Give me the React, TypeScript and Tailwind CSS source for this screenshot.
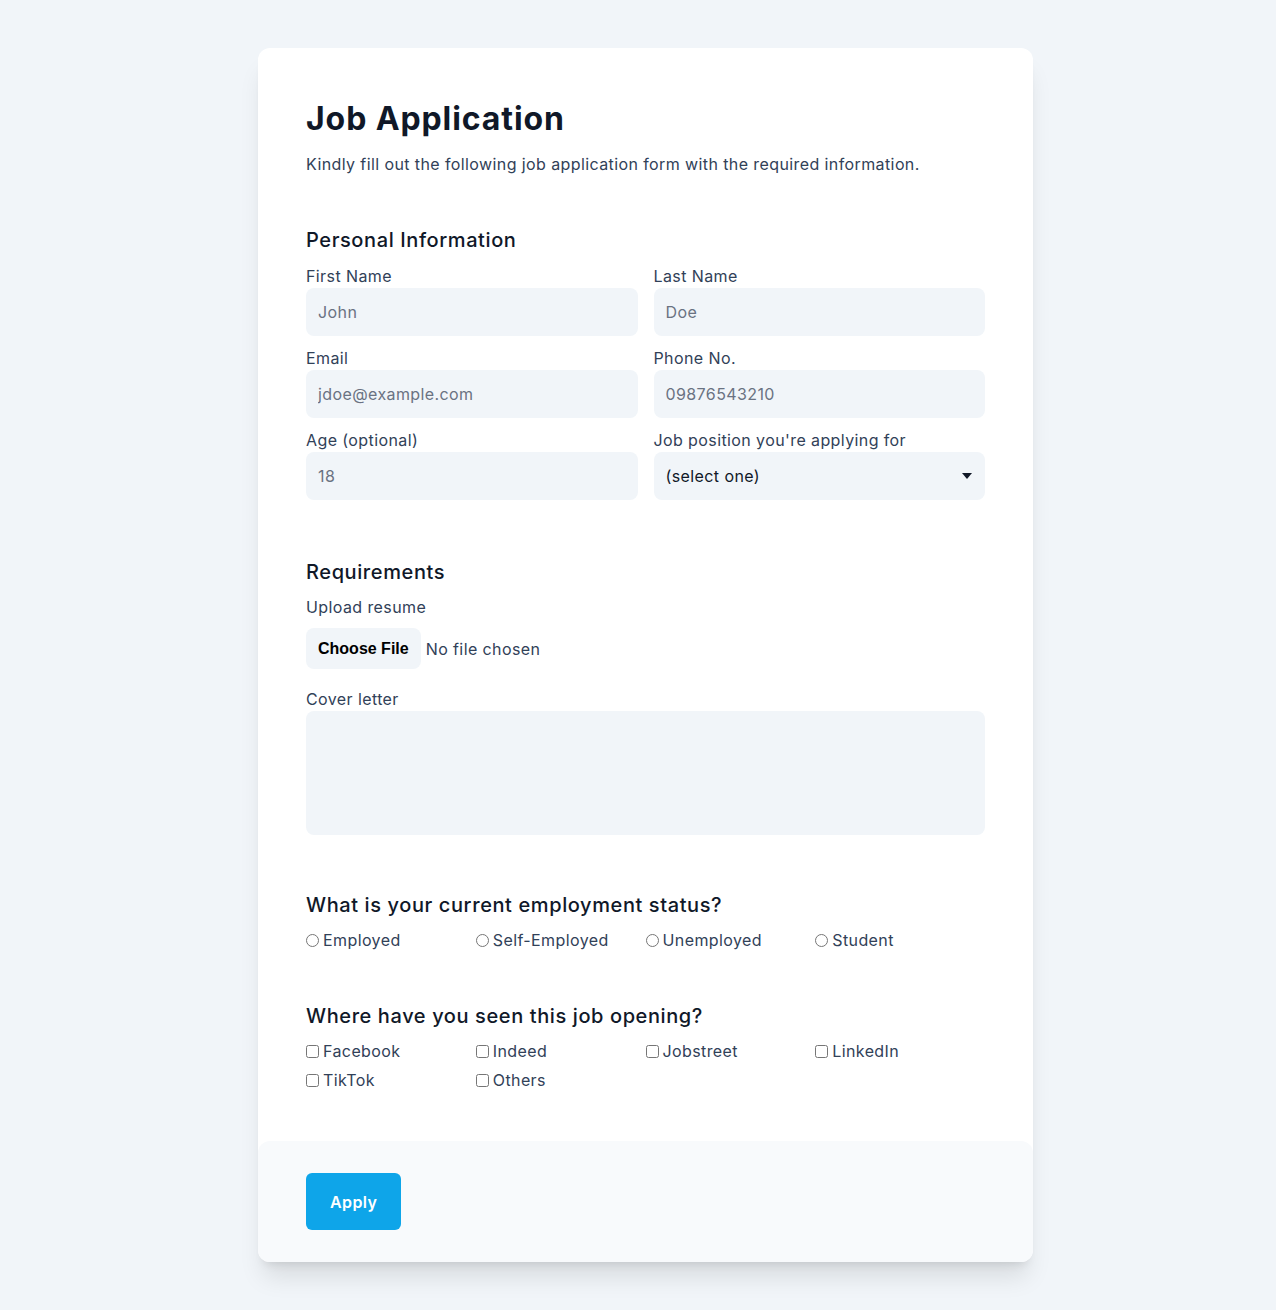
import React from 'react';

const FONT = "font-['Inter',_'Open_Sans',_sans-serif]";

const fields = [
    { label: 'First Name', placeholder: 'John' },
    { label: 'Last Name', placeholder: 'Doe' },
    { label: 'Email', placeholder: 'jdoe@example.com' },
    { label: 'Phone No.', placeholder: '09876543210' },
    { label: 'Age (optional)', placeholder: '18' },
];

const statuses = ['Employed', 'Self-Employed', 'Unemployed', 'Student'];
const sources = ['Facebook', 'Indeed', 'Jobstreet', 'LinkedIn', 'TikTok', 'Others'];

function Label({ children }: { children: React.ReactNode }) {
    return <label className="block text-base leading-6 tracking-[0.4px] text-slate-700">{children}</label>;
}

function SectionTitle({ children, className = '' }: { children: React.ReactNode; className?: string }) {
    return <h2 className={`text-xl leading-7 font-medium tracking-[0.6px] text-gray-900 ${className}`}>{children}</h2>;
}

export default function App() {
    return (
        <div className={`min-h-screen bg-slate-100 py-12 pl-[15px] flex justify-center ${FONT}`}>
            <div className="w-[775px] rounded-xl bg-white shadow-xl">
                <div className="px-12 pt-[53px] pb-[49px]">
                    <h1 className="text-[32px] leading-9 font-bold tracking-[0.9px] text-gray-900">Job Application</h1>
                    <p className="mt-[15px] text-base leading-6 tracking-[0.4px] text-slate-700">
                        Kindly fill out the following job application form with the required information.
                    </p>

                    {/* Personal information */}
                    <SectionTitle className="mt-[50px]">Personal Information</SectionTitle>
                    <div className="mt-2.5 grid grid-cols-2 gap-x-4 gap-y-2.5">
                        {fields.map(f => (
                            <div key={f.label}>
                                <Label>{f.label}</Label>
                                <input
                                    type="text"
                                    placeholder={f.placeholder}
                                    className="block h-12 w-full rounded-lg bg-slate-100 px-3 text-base tracking-[0.4px] text-gray-900 placeholder:text-gray-500 outline-none"
                                />
                            </div>
                        ))}
                        <div>
                            <Label>Job position you're applying for</Label>
                            <div className="flex h-12 w-full items-center justify-between rounded-lg bg-slate-100 px-3 text-base tracking-[0.4px] text-gray-900">
                                <span>(select one)</span>
                                <svg width="10" height="6" viewBox="0 0 10 6" className="mr-[1px]">
                                    <path d="M0 0h10L5 6z" fill="#111827" />
                                </svg>
                            </div>
                        </div>
                    </div>

                    {/* Requirements */}
                    <SectionTitle className="mt-[58px]">Requirements</SectionTitle>
                    <div className="mt-[9px]">
                        <Label>Upload resume</Label>
                    </div>
                    <div className="mt-[9px] flex items-center gap-[5px]">
                        <span className="flex h-[41px] items-center rounded-lg bg-slate-100 px-3 font-['Liberation_Sans',_Arial,_sans-serif] text-base font-bold text-black">
                            Choose File
                        </span>
                        <span className="text-base tracking-[0.4px] text-slate-700">No file chosen</span>
                    </div>
                    <div className="mt-[18px]">
                        <Label>Cover letter</Label>
                        <textarea className="block h-[124px] w-full resize-none rounded-lg bg-slate-100 px-3 py-2 text-base outline-none" />
                    </div>

                    {/* Employment status */}
                    <SectionTitle className="mt-[56px]">What is your current employment status?</SectionTitle>
                    <div className="mt-[9px] grid grid-cols-4">
                        {statuses.map(s => (
                            <label key={s} className="flex items-center gap-1 text-base leading-6 tracking-[0.4px] text-slate-700">
                                <input type="radio" name="status" className="h-[13px] w-[13px]" />
                                {s}
                            </label>
                        ))}
                    </div>

                    {/* Sources */}
                    <SectionTitle className="mt-[50px]">Where have you seen this job opening?</SectionTitle>
                    <div className="mt-[9px] grid grid-cols-4 gap-y-[5px]">
                        {sources.map(s => (
                            <label key={s} className="flex items-center gap-1 text-base leading-6 tracking-[0.4px] text-slate-700">
                                <input type="checkbox" className="h-[13px] w-[13px]" />
                                {s}
                            </label>
                        ))}
                    </div>
                </div>

                <div className="rounded-xl bg-slate-50 px-12 py-8">
                    <button className="h-[57px] rounded-md bg-[#0ea5e9] px-6 text-base font-semibold tracking-[0.4px] text-white">
                        Apply
                    </button>
                </div>
            </div>
        </div>
    );
}
